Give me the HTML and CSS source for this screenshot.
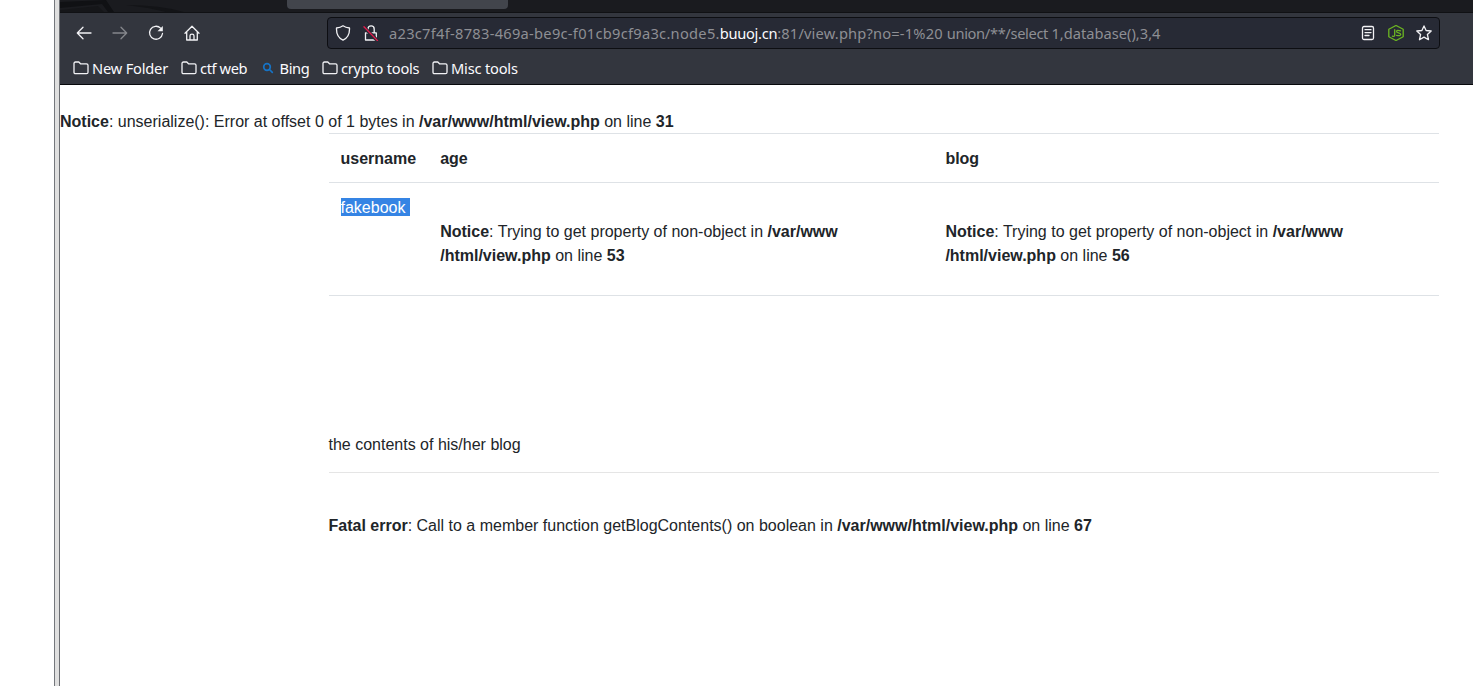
FILE: index.html
```
<!DOCTYPE html>
<html lang="en">
<head>
<meta charset="utf-8">
<title>view.php</title>
<link rel="stylesheet" href="styles.css">
</head>
<body>
<div class="desktop">
  <div class="gutter"></div>
  <div class="splitter"></div>
  <div class="browser">
    <header class="chrome">
      <div class="tabstrip">
        <svg class="theme-art" width="220" height="12" viewBox="0 0 220 12"><path d="M0 2L46 0L54 12H48L42 4L0 8Z" fill="#101114"/><path d="M0 10L38 6L44 12H0Z" fill="#151619"/><path d="M66 5Q100 5 124 12H106Q86 7 66 5Z" fill="#131417"/></svg>
        <div class="tab"></div>
      </div>
      <div class="toolbar">
        <nav class="nav">
          <svg class="icon" viewBox="0 0 16 16"><path d="M15 8H1.5M7 2.2L1.3 8L7 13.8"/></svg>
          <svg class="icon dim" viewBox="0 0 16 16"><path d="M1 8H14.5M9 2.2L14.7 8L9 13.8"/></svg>
          <svg class="icon" viewBox="0 0 16 16"><path d="M12.6 3.1A6.5 6.5 0 1 0 14.5 8.5"/><path d="M14.8 1V6.3H9.5Z" class="solid"/></svg>
          <svg class="icon" viewBox="0 0 16 16"><path d="M1 8.2L8 1.2L15 8.2M2.7 6.8V15H13.3V6.8M6 14.8V10.7Q6 9.2 8 9.2T10 10.7V14.8"/></svg>
        </nav>
        <div class="urlbar">
          <svg class="icon" viewBox="0 0 16 16"><path d="M8 .8C10 2.3 12 2.8 14.5 3C14.8 9 13 13 8 15.2C3 13 1.2 9 1.5 3C4 2.8 6 2.3 8 .8Z"/></svg>
          <svg class="icon lock" viewBox="0 0 16 16"><path d="M5 7.5V4A3.1 3.1 0 0 1 11.2 4V7.5M2.5 7.8H13.3V15H2.5Z"/><path class="slash-gap" d="M1 2.3L14.5 15.8"/><path class="slash" d="M1 1.8L14.5 15.6"/></svg>
          <div class="url"><span class="sub">a23c7f4f-8783-469a-be9c-f01cb9cf9a3c.node5.</span><span class="host">buuoj.cn</span><span class="path">:81/view.php?no=-1%20 </span><span class="query">union/**/select </span>1,database(),3,4</div>
          <svg class="icon" viewBox="0 0 16 16"><rect x="2.5" y="1.5" width="11" height="13" rx="1.5"/><path d="M5 4.7H11M5 7.6H11M5 10.5H9"/></svg>
          <svg class="icon node" viewBox="0 0 16 16"><path d="M8 .5L15.2 4.3V11.7L8 15.5L.8 11.7V4.3Z"/><path d="M6.7 4.7V10.2Q6.7 11.8 4.4 11.2M12.5 5.8Q8.6 4.6 8.6 6.4C8.6 8.3 12.8 7.2 12.8 9.4Q12.4 11.2 8.6 10.3"/></svg>
          <svg class="icon" viewBox="0 0 16 16"><path d="M8 .9L10.1 5.5L15.2 6L11.4 9.5L12.5 14.7L8 12.1L3.5 14.7L4.6 9.5L.8 6L5.9 5.5Z"/></svg>
        </div>
      </div>
      <div class="bookmarks">
        <div class="bm b1"><svg class="icon" viewBox="0 0 16 16"><path d="M1 3.5Q1 2 2.5 2H5.8L7.5 3.8H13.5Q15 3.8 15 5.3V12.2Q15 13.7 13.5 13.7H2.5Q1 13.7 1 12.2Z"/></svg><span>New Folder</span></div>
        <div class="bm b2"><svg class="icon" viewBox="0 0 16 16"><path d="M1 3.5Q1 2 2.5 2H5.8L7.5 3.8H13.5Q15 3.8 15 5.3V12.2Q15 13.7 13.5 13.7H2.5Q1 13.7 1 12.2Z"/></svg><span>ctf web</span></div>
        <div class="bm b3"><svg class="icon search" viewBox="0 0 16 16"><circle cx="7" cy="7" r="3.3"/><path d="M9.5 9.5L12.3 12.3"/></svg><span>Bing</span></div>
        <div class="bm b4"><svg class="icon" viewBox="0 0 16 16"><path d="M1 3.5Q1 2 2.5 2H5.8L7.5 3.8H13.5Q15 3.8 15 5.3V12.2Q15 13.7 13.5 13.7H2.5Q1 13.7 1 12.2Z"/></svg><span>crypto tools</span></div>
        <div class="bm b5"><svg class="icon" viewBox="0 0 16 16"><path d="M1 3.5Q1 2 2.5 2H5.8L7.5 3.8H13.5Q15 3.8 15 5.3V12.2Q15 13.7 13.5 13.7H2.5Q1 13.7 1 12.2Z"/></svg><span>Misc tools</span></div>
      </div>
    </header>
    <main class="page">
      <div class="notice"><b>Notice</b>: unserialize(): Error at offset 0 of 1 bytes in <b>/var/www/html/view.php</b> on line <b>31</b></div>
      <div class="container">
        <div class="row head"><div>username</div><div>age</div><div>blog</div></div>
        <div class="row data">
          <div><span class="selected">fakebook </span></div>
          <div><br><b>Notice</b>: Trying to get property of non-object in <b>/var/www<br>/html/view.php</b> on line <b>53</b></div>
          <div><br><b>Notice</b>: Trying to get property of non-object in <b>/var/www<br>/html/view.php</b> on line <b>56</b></div>
        </div>
        <p class="blog">the contents of his/her blog</p>
        <div class="fatal"><b>Fatal error</b>: Call to a member function getBlogContents() on boolean in <b>/var/www/html/view.php</b> on line <b>67</b></div>
      </div>
    </main>
  </div>
</div>
</body>
</html>
```
FILE: styles.css
```
* { box-sizing: border-box; }
body { margin: 0; background: #fff; overflow: hidden; }
.desktop { display: flex; height: 686px; }
.gutter { width: 54px; }
.splitter { width: 6px; background: #dfdfdf; border-left: 1px solid #74777c; border-right: 1px solid #6b6d72; }
.browser { flex: 1; min-width: 0; }
.chrome { height: 85px; background: #33363e; border-bottom: 1px solid #08090c; font-family: "Noto Sans", sans-serif; color: #fbfbfe; }
.tabstrip { height: 13px; display: flex; background: #1a1b1f; border-bottom: 1px solid #101114; }
.theme-art { display: block; }
.tab { width: 221px; height: 9px; margin-left: 7px; background: #42454c; border-radius: 0 0 4px 4px; }
.toolbar { height: 40px; display: flex; align-items: center; padding: 0 33px 0 16px; }
.nav { display: flex; gap: 20px; width: 251px; }
.icon { width: 16px; height: 16px; flex: none; fill: none; stroke: #f2f2f5; stroke-width: 1.3; stroke-linecap: round; stroke-linejoin: round; }
.icon.dim { stroke: #85878c; }
.icon .solid { fill: #f2f2f5; stroke: none; }
.icon .slash { stroke: #e51a4c; }
.icon .slash-gap { stroke: #272a35; stroke-width: 3.4; }
.icon.node { stroke: #6cb522; stroke-width: 1.3; }
.icon.search { stroke: #1673c5; stroke-width: 1.7; }
.urlbar { flex: 1; height: 32px; display: flex; align-items: center; gap: 12px; padding: 0 7px; background: #272a35; border: 1px solid #0d0e12; border-radius: 4px; }
.url { flex: 1; margin-left: -2px; white-space: pre; font-size: 14.67px; line-height: 20px; color: #8e8f94; }
.sub { letter-spacing: 0.27px; }
.host { color: #fbfbfe; letter-spacing: -0.3px; }
.path { letter-spacing: 0.17px; }
.query { letter-spacing: -0.35px; }
.bookmarks { height: 30px; display: flex; align-items: center; padding-left: 12.5px; font-size: 14.67px; }
.bm { display: flex; align-items: center; gap: 3.5px; white-space: nowrap; }
.b1 { width: 108px; letter-spacing: -0.2px; }
.b2 { width: 79.5px; letter-spacing: -0.4px; }
.b3 { width: 61.5px; letter-spacing: -0.4px; }
.b4 { width: 110px; letter-spacing: -0.25px; }
.b5 { letter-spacing: -0.2px; }
.page { font: 16px/24px "Liberation Sans", Arial, sans-serif; color: #212529; padding-top: 25px; }
.container { width: 1110.5px; margin: -1px 0 0 268.5px; }
.row { display: grid; grid-template-columns: 99.7px 505.2px 505.6px; border-top: 1px solid #dee2e6; }
.row > div { padding: 13px 12px 11px; white-space: nowrap; }
.head { font-weight: bold; }
.data { height: 114px; border-bottom: 1px solid #dee2e6; }
.selected { background: #3584e4; color: #fff; white-space: pre; padding-top: 1px; }
.blog { margin: 137px 0 0; height: 40px; border-bottom: 1px solid #e5e5e5; }
.fatal { margin-top: 41px; }
```
